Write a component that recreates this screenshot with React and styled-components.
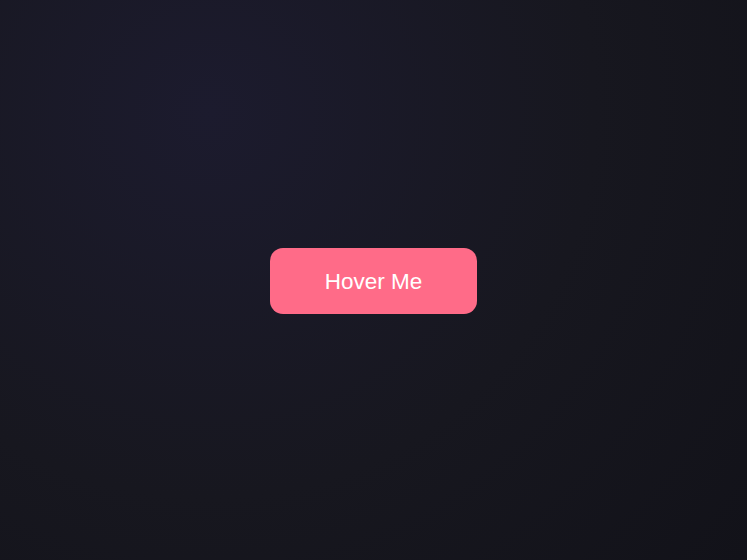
import React from 'react';
import styled, { createGlobalStyle } from 'styled-components';

const GlobalStyle = createGlobalStyle`
    html, body {
        margin: 0;
        padding: 0;
        height: 100%;
    }
    body {
        background: #13131b;
        font-family: "Liberation Sans", Arial, sans-serif;
    }
    #root {
        height: 100%;
    }
`;

const SPage = styled.div`
    width: 100vw;
    height: 100vh;
    display: flex;
    align-items: center;
    justify-content: center;
    background: radial-gradient(circle at 28% 20%, #1c1b2e 0%, #17171f 55%, #121219 100%);
`;

const SButton = styled.button`
    background-color: #ff6b88;
    color: #fff;
    border: none;
    outline: none;
    border-radius: 13px;
    width: 207px;
    height: 66px;
    margin-top: 1px;
    padding: 2px 0 0;
    font-family: "Liberation Sans", Arial, sans-serif;
    font-size: 22.5px;
    cursor: pointer;
    transition: transform 0.2s ease, box-shadow 0.2s ease;
    &:hover {
        transform: translateY(-2px);
        box-shadow: 0 8px 24px rgba(255, 107, 136, 0.35);
    }
`;

export default function App() {
    return (
        <>
            <GlobalStyle />
            <SPage>
                <SButton>Hover Me</SButton>
            </SPage>
        </>
    );
}
